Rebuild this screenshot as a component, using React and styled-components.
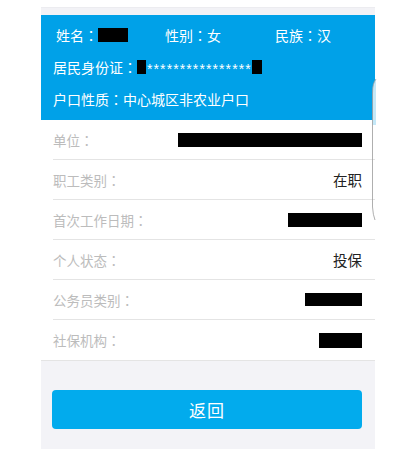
import React from "react";
import styled, { createGlobalStyle } from "styled-components";

const Global = createGlobalStyle`
  html, body { margin: 0; padding: 0; background: #ffffff; }
  body { font-family: "Noto Sans CJK SC", "Noto Sans", sans-serif; }
`;

const Panel = styled.div`
  position: relative;
  width: 334px;
  margin: 7px 0 0 41px;
  background: #f3f3f7;
`;

const TopStrip = styled.div`
  height: 8px;
  background: #f2f2f6;
  border-top: 1px solid #ececf0;
  box-sizing: border-box;
`;

const Header = styled.div`
  background: #00a1e8;
  padding: 4px 0 5px;
  color: #ffffff;
  font-size: 14px;
`;

const HeaderRow = styled.div`
  height: 32px;
  display: ${(p) => (p.$grid ? "grid" : "flex")};
  grid-template-columns: 109px 110px 1fr;
  align-items: center;
  padding-left: ${(p) => p.$pad}px;
  white-space: nowrap;
`;

const Cell = styled.div`
  display: flex;
  align-items: center;
`;

const Colon = styled.span`
  font-family: "Noto Sans CJK TC", "Noto Sans CJK SC", sans-serif;
`;

const Redact = styled.span`
  display: inline-block;
  background: #000;
  width: ${(p) => p.$w}px;
  height: ${(p) => p.$h || 14}px;
  flex: none;
`;

const Stars = styled.span`
  font-family: "Liberation Sans", Arial, sans-serif;
  font-size: 14px;
  letter-spacing: 1.1px;
  margin: 0 0 0 1px;
  line-height: 1;
  position: relative;
  top: 2px;
`;

const List = styled.div`
  background: #ffffff;
  border-bottom: 1px solid #e4e4e4;
`;

const Row = styled.div`
  height: 40px;
  box-sizing: border-box;
  margin-left: 12px;
  padding-right: 13px;
  display: flex;
  align-items: center;
  justify-content: space-between;
  border-bottom: ${(p) => (p.$last ? "none" : "1px solid #e4e4e4")};
`;

const Label = styled.span`
  color: #bcbcbc;
  font-size: 13.5px;
`;

const Value = styled.span`
  color: #222;
  font-size: 14.5px;
`;

const Footer = styled.div`
  padding: 29px 13px 20px 11px;
`;

const Button = styled.button`
  display: block;
  width: 100%;
  height: 39px;
  border: none;
  border-radius: 4px;
  background: #02abed;
  color: #ffffff;
  font-family: "Noto Sans CJK SC", "Noto Sans", sans-serif;
  font-size: 17px;
  letter-spacing: 1px;
  padding: 0;
`;

const Curl = styled.svg`
  position: absolute;
  left: 327px;
  top: 60px;
  width: 12px;
  height: 160px;
  pointer-events: none;
`;

const rows = [
  { label: "单位", w: 184, h: 14 },
  { label: "职工类别", value: "在职" },
  { label: "首次工作日期", w: 74, h: 14 },
  { label: "个人状态", value: "投保" },
  { label: "公务员类别", w: 57, h: 13 },
  { label: "社保机构", w: 43, h: 15 },
];

const C = () => <Colon>：</Colon>;

export default function App() {
  return (
    <>
      <Global />
      <Panel>
        <TopStrip />
        <Header>
          <HeaderRow $grid $pad={15}>
            <Cell>
              姓名<C />
              <Redact $w={30} />
            </Cell>
            <Cell>
              性别<C />女
            </Cell>
            <Cell>
              民族<C />汉
            </Cell>
          </HeaderRow>
          <HeaderRow $pad={12}>
            居民身份证<C />
            <Redact $w={9} />
            <Stars>****************</Stars>
            <Redact $w={10} />
          </HeaderRow>
          <HeaderRow $pad={12}>
            户口性质<C />中心城区非农业户口
          </HeaderRow>
        </Header>
        <List>
          {rows.map((r, i) => (
            <Row key={r.label} $last={i === rows.length - 1}>
              <Label>
                {r.label}
                <C />
              </Label>
              {r.value ? <Value>{r.value}</Value> : <Redact $w={r.w} $h={r.h} />}
            </Row>
          ))}
        </List>
        <Footer>
          <Button>返回</Button>
        </Footer>
        <Curl viewBox="0 0 12 160">
          <path d="M8 12 Q4.5 16 4.5 26 L4.5 58 L8 58 Z" fill="#c4e8f8" />
          <path
            d="M8 12 Q4.5 16 4.5 26 L4.5 140 Q5 148 7 153"
            fill="none"
            stroke="#9a9a9a"
            strokeWidth="0.8"
          />
        </Curl>
      </Panel>
    </>
  );
}
